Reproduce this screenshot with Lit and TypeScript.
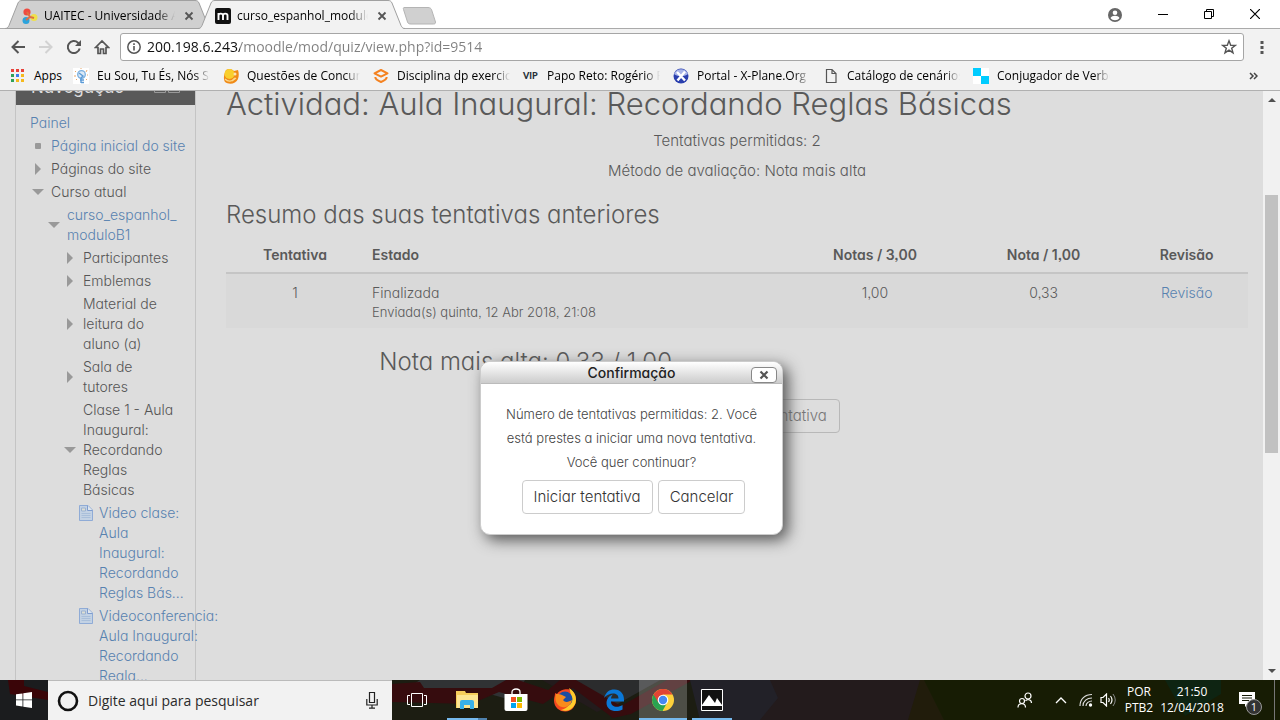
import { LitElement, html, css, svg, nothing } from "lit";
import { customElement, property } from "lit/decorators.js";

const closeMark = (stroke: string) => svg`<path d="M1.500 1.500l7 7M8.500 1.500l-7 7" stroke=${stroke} stroke-width="1.800" fill="none"/>`;

const bookmarkIcons: Record<string, unknown> = {
  idea: svg`<rect width="16" height="16" fill="#fff"/><circle cx="8.500" cy="6.500" r="3.800" fill="#dbe9f6" stroke="#7aaede" stroke-width="1.300"/><path d="M2 3l1 1M14 2l-1 2M8 0v1M1 8h2M3 12l1-1M13 11l1 1M14 7h1" stroke="#e9a86a"/><path d="M6 5l4 3-2 2v5M7 12h4M8 14.500h3" stroke="#5c9bd6" stroke-width="1.400" fill="none"/>`,
  owl: svg`<path d="M3 2c3-2 6-1 8 1l4-1c1 3 1 6 0 9-2 5-9 6-13 3-2-3-1-8 1-12z" fill="#f08a17"/><circle cx="6.500" cy="6" r="5" fill="#f9cf2d"/><path d="M2 11c3 3 7 3 10-1M9 13l4-3" stroke="#fbd98c" stroke-width="1.400" fill="none"/><circle cx="12" cy="6" r="1.500" fill="#fbe3b0"/>`,
  cap: svg`<path d="M8 2l6.500 3.300L8 8.600 1.500 5.300z" fill="none" stroke="#f58220" stroke-width="2" stroke-linejoin="round"/><path d="M2.300 9c0 2 2 3.500 5.700 5 3.700-1.500 5.700-3 5.700-5" fill="none" stroke="#f58220" stroke-width="2"/>`,
  plane: svg`<circle cx="8" cy="8" r="7.500" fill="#2a3fae"/><path d="M1 6a7.500 7.500 0 0 1 14 0C11 9 5 9 1 6z" fill="#a8b4e8"/><path d="M4 4l8 8.500M12 3.500L4.500 12.500" stroke="#fff" stroke-width="2.400"/>`,
  file: svg`<path d="M3.500 1.500h5.500l4 4v9H3.500zM9 1.500v4h4" fill="none" stroke="#555" stroke-width="1.200"/>`,
  squares: svg`<rect width="16" height="16" fill="#fff"/><path d="M0 0h8v8H0zM8 8h8v8H8z" fill="#0cf"/>`,
  vip: nothing,
};

const bookmarks = [
  ["idea", "Eu Sou, Tu És, Nós Somos"],
  ["owl", "Questões de Concursos"],
  ["cap", "Disciplina dp exercicios"],
  ["vip", "Papo Reto: Rogério Faria"],
  ["plane", "Portal - X-Plane.Org Forum"],
  ["file", "Catálogo de cenários X"],
  ["squares", "Conjugador de Verbos"],
];

type Node = { level: number; lines: string[]; mark: "square" | "closed" | "open" | "page" | "none"; link?: boolean };

const tree: Node[] = [
  { level: 0, lines: ["Painel"], mark: "none", link: true },
  { level: 1, lines: ["Página inicial do site"], mark: "square", link: true },
  { level: 1, lines: ["Páginas do site"], mark: "closed" },
  { level: 1, lines: ["Curso atual"], mark: "open" },
  { level: 2, lines: ["curso_espanhol_", "moduloB1"], mark: "open", link: true },
  { level: 3, lines: ["Participantes"], mark: "closed" },
  { level: 3, lines: ["Emblemas"], mark: "closed" },
  { level: 3, lines: ["Material de", "leitura do", "aluno (a)"], mark: "closed" },
  { level: 3, lines: ["Sala de", "tutores"], mark: "closed" },
  { level: 3, lines: ["Clase 1 - Aula", "Inaugural:", "Recordando", "Reglas", "Básicas"], mark: "open" },
  { level: 4, lines: ["Video clase:", "Aula", "Inaugural:", "Recordando", "Reglas Bás..."], mark: "page", link: true },
  { level: 4, lines: ["Videoconferencia:", "Aula Inaugural:", "Recordando", "Regla..."], mark: "page", link: true },
];

const marks: Record<string, unknown> = {
  square: html`<svg width="16" height="12" viewBox="0 0 16 12"><rect x="5" y="3" width="6" height="6" rx="1" fill="#999"/></svg>`,
  closed: html`<svg width="16" height="12" viewBox="0 0 16 12"><path d="M5 0l6 6-6 6z" fill="#999"/></svg>`,
  open: html`<svg width="16" height="12" viewBox="0 0 16 12"><path d="M2 3h12l-6 6z" fill="#999"/></svg>`,
  page: html`<svg width="14" height="16" viewBox="0 0 14 16"><path d="M.500.500h8.500l4.500 4.500v10.500H.500z" fill="#c3d2e4" stroke="#8fabd6"/><path d="M8.500.500v5h5" fill="#dfe6ee" stroke="#7f9dcf"/><path d="M2.500 3h4v3h-4z" fill="#dedfd4" stroke="#9bb2d2"/><path d="M2.500 8.500h9M2.500 10.500h9M2.500 12.500h9" stroke="#a9bfda"/></svg>`,
  none: nothing,
};

@customElement("browser-chrome")
class BrowserChrome extends LitElement {
  static styles = css`
    :host { display: block; font: 12px/16px "Open Sans", "Noto Sans", sans-serif; color: #000; }
    svg { display: block; flex: none; }
    button { border: 0; padding: 0; background: none; display: grid; place-items: center; flex: none; }
    a { color: inherit; text-decoration: none; }
    .strip { display: flex; height: 29px; background: #fff; padding: 0 2px 0 5px; box-shadow: inset 0 -1px #aaa; }
    .tab { position: relative; display: flex; align-items: center; gap: 6px; width: 207px; height: 29px; padding: 2px 15px 0 17px; box-sizing: border-box; }
    .tab + .tab { margin-left: -14px; z-index: 1; }
    .shape { position: absolute; inset: 0; z-index: -1; }
    .first { z-index: 0; }
    .label { flex: 1; min-width: 0; overflow: hidden; white-space: nowrap; mask-image: linear-gradient(90deg, #000 86%, transparent); }
    .tab .close { width: 16px; height: 16px; }
    .new { margin: 0 auto 0 -3px; padding-top: 3px; }
    .win { width: 46px; height: 27px; }
    .user { margin-right: 18px; }
    .bar { display: flex; align-items: center; background: #f2f2f2; padding: 4px 0 1px 4px; }
    .bar .tool { width: 28px; height: 28px; }
    .omni { flex: 1; display: flex; align-items: center; gap: 6px; height: 28px; box-sizing: border-box; margin-left: 4px; padding: 0 6px; background: #fff; border: 1px solid #a6a6a6; border-radius: 3px; }
    .omni input { flex: 1; min-width: 0; border: 0; padding: 0; outline: 0; font: 14px/20px "Open Sans", sans-serif; color: transparent; background: linear-gradient(90deg, #111 93px, #808080 93px); -webkit-background-clip: text; background-clip: text; }
    .menu { width: 36px; height: 28px; }
    .marks { display: flex; align-items: center; gap: 13px; height: 28px; padding: 0 22px 0 10px; background: #f2f2f2; border-bottom: 1px solid #b0b0b0; }
    .mark { display: flex; align-items: center; gap: 8px; width: 137px; }
    .mark.apps { width: 50px; }
    .apps .label { mask-image: none; overflow: visible; }
    .vip { flex: none; width: 16px; font: 900 9px/16px Lato, sans-serif; color: #263038; }
    .more { margin-left: auto; }
  `;

  render() {
    return html`
      <div class="strip">
        <div class="tab first">
          <svg class="shape" width="207" height="29" viewBox="0 0 207 29"><path d="M0 28.500c2 0 3-1 4-3L13 3c1-2 2-2.500 4-2.500h173c2 0 3 .500 4 2.500l9 22.500c1 2 2 3 4 3z" fill="#d0d0d0" stroke="#a0a0a0"/></svg>
          <svg width="16" height="16" viewBox="0 0 16 16"><circle cx="5" cy="4" r="3.600" fill="#ee4b40"/><circle cx="12" cy="9.500" r="3.500" fill="#efe04a"/><circle cx="4" cy="12.500" r="3.500" fill="#2ba3dc"/><path d="M5 4l3 5 4 1M8 9l-4 3" stroke="#dd7044" stroke-width="2" fill="none"/></svg>
          <span class="label">UAITEC - Universidade Aberta</span>
          <button class="close" aria-label="Fechar guia"><svg width="10" height="10">${closeMark("#555")}</svg></button>
        </div>
        <div class="tab">
          <svg class="shape" width="207" height="29" viewBox="0 0 207 29"><path d="M0 29c2 0 3-1 4-3.500L13 3c1-2 2-2.500 4-2.500h173c2 0 3 .500 4 2.500l9 22.500c1 2.500 2 3.500 4 3.500z" fill="#f2f2f2"/><path d="M0 28.500c2 0 3-1 4-3L13 3c1-2 2-2.500 4-2.500h173c2 0 3 .500 4 2.500l9 22.500c1 2 2 3 4 3" fill="none" stroke="#a0a0a0"/></svg>
          <svg width="16" height="16" viewBox="0 0 16 16"><rect width="16" height="16" rx="2" fill="#111"/><path d="M3.500 12V5M3.500 7.500c0-2.500 4.500-2.500 4.500 0V12M8 7.500c0-2.500 4.500-2.500 4.500 0V12" fill="none" stroke="#fff" stroke-width="1.900"/></svg>
          <span class="label">curso_espanhol_moduloB1</span>
          <button class="close" aria-label="Fechar guia"><svg width="10" height="10">${closeMark("#555")}</svg></button>
        </div>
        <button class="new" aria-label="Nova guia"><svg width="34" height="18" viewBox="0 0 34 18"><path d="M2 .500h24c2 0 3 1 3.500 2l4 12.500c0 1.500-.500 2-2 2H9c-2 0-3-.500-3.500-2L1.500 2.500c-.400-1 0-2 .500-2z" fill="#d0d0d0" stroke="#b4b4b4"/></svg></button>
        <button class="user" aria-label="Usuário"><svg width="14" height="14" viewBox="0 0 14 14"><circle cx="7" cy="7" r="7" fill="#666"/><circle cx="7" cy="4.700" r="2.300" fill="#fff"/><path d="M2.500 10c1.500-3 7.500-3 9 0-2 3-7 3-9 0z" fill="#fff"/></svg></button>
        <button class="win" aria-label="Minimizar"><svg width="10" height="10"><path d="M0 5.500h10" stroke="#000"/></svg></button>
        <button class="win" aria-label="Restaurar"><svg width="10" height="10"><path d="M.500 2.500h7v7h-7zM2.500 2.500v-2h7v7h-2" fill="none" stroke="#000"/></svg></button>
        <button class="win" aria-label="Fechar"><svg width="10" height="10"><path d="M0 0l10 10M10 0L0 10" stroke="#000" stroke-width="1.200"/></svg></button>
      </div>
      <div class="bar">
        <button class="tool" aria-label="Voltar"><svg width="14" height="14" viewBox="0 0 14 14"><path d="M14 7H1.500M7.500 1L1.500 7l6 6" fill="none" stroke="#555" stroke-width="2"/></svg></button>
        <button class="tool" aria-label="Avançar"><svg width="14" height="14" viewBox="0 0 14 14"><path d="M0 7h12.500M6.500 1l6 6-6 6" fill="none" stroke="#d2d2d2" stroke-width="2"/></svg></button>
        <button class="tool" aria-label="Recarregar"><svg width="14" height="14" viewBox="0 0 14 14"><path d="M12.700 8.500A6 6 0 1 1 11 2.700l1.200 1.200" fill="none" stroke="#555" stroke-width="2"/><path d="M14 0v6H8z" fill="#555"/></svg></button>
        <button class="tool" aria-label="Página inicial"><svg width="16" height="16" viewBox="0 0 16 16"><path d="M1.500 8.500L8 2l6.500 6.500H12v6H9.500V10h-3v4.500H4v-6z" fill="none" stroke="#555" stroke-width="1.700"/></svg></button>
        <div class="omni">
          <svg width="14" height="14" viewBox="0 0 14 14"><circle cx="7" cy="7" r="6.200" fill="none" stroke="#555" stroke-width="1.500"/><path d="M7 6v4.500M7 3.300v1.600" stroke="#555" stroke-width="1.600"/></svg>
          <input aria-label="Endereço" value="200.198.6.243/moodle/mod/quiz/view.php?id=9514">
          <button aria-label="Favoritar"><svg width="16" height="16" viewBox="0 0 16 16"><path d="M8 1.800l1.700 4.400 4.600.200-3.600 2.900 1.300 4.500L8 11.200l-4 2.600 1.300-4.500L1.700 6.400l4.600-.200z" fill="none" stroke="#555" stroke-width="1.400"/></svg></button>
        </div>
        <button class="menu" aria-label="Menu"><svg width="4" height="14"><path d="M.500 1h3v3h-3zM.500 6h3v3h-3zM.500 11h3v3h-3z" fill="#555"/></svg></button>
      </div>
      <nav class="marks" aria-label="Favoritos">
        <a class="mark apps" href="#"><svg width="16" height="16" viewBox="0 0 16 16">${[["#e8423a", "#e8423a", "#e8423a"], ["#2fa159", "#3b7ded", "#f5b91c"], ["#2fa159", "#f5b91c", "#f5b91c"]].map((row, y) => row.map((c, x) => svg`<rect x=${1 + x * 5} y=${1 + y * 5} width="3" height="3" fill=${c}/>`))}</svg><span class="label">Apps</span></a>
        ${bookmarks.map(([icon, label]) => html`<a class="mark" href="#">${icon === "vip" ? html`<span class="vip">VIP</span>` : html`<svg width="16" height="16" viewBox="0 0 16 16">${bookmarkIcons[icon]}</svg>`}<span class="label">${label}</span></a>`)}
        <button class="more" aria-label="Mais favoritos"><svg width="9" height="8"><path d="M1 1l3 3-3 3M5 1l3 3-3 3" fill="none" stroke="#444" stroke-width="1.500"/></svg></button>
      </nav>`;
  }
}

@customElement("course-nav")
class CourseNav extends LitElement {
  static styles = css`
    :host { display: block; border: 1px solid #c4c4c4; border-top: 0; color: #555; font-size: 14px; line-height: 20px; }
    .head { display: flex; align-items: center; gap: 2px; height: 30px; padding: 0 15px 6px; box-sizing: border-box; background: #595959; color: #ddd; font-size: 17px; font-weight: 400; margin: 0; }
    .title { flex: 1; }
    ul { list-style: none; margin: 0; padding: 8px 0 0 14px; white-space: nowrap; }
    .item { display: flex; align-items: center; gap: 5px; padding-bottom: 3px; }
    .l2 { padding-left: 16px; }
    .l3 { padding-left: 32px; }
    .l4 { padding-left: 49px; gap: 6px; align-items: flex-start; }
    .l4 svg { margin-top: 2px; }
    svg { flex: none; display: block; }
    .line { display: block; }
    a { color: #5882b0; text-decoration: none; }
  `;
  render() {
    return html`
      <h2 class="head"><span class="title">Navegação</span>
        <svg width="26" height="12" viewBox="0 0 26 12"><path d="M.500.500h11v11H.500zM14.500.500h11v11h-11z" fill="none" stroke="#999"/></svg></h2>
      <ul>${tree.map((n) => {
        const text = n.lines.map((l) => html`<span class="line">${l}</span>`);
        return html`<li class="item l${n.level}">${marks[n.mark]}${n.link ? html`<a href="#">${text}</a>` : html`<span>${text}</span>`}</li>`;
      })}</ul>`;
  }
}

@customElement("confirm-dialog")
class ConfirmDialog extends LitElement {
  @property() heading = "";
  static styles = css`
    :host { display: block; width: 303px; background: #fff; border: 1px solid #ccc; border-radius: 10px; box-sizing: border-box; box-shadow: 5px 5px 15px #555; overflow: hidden; color: #444; }
    .head { display: grid; grid-template-columns: 26px 1fr 26px; align-items: center; height: 21px; padding: 0 5px; background: linear-gradient(#fff, #ccc); border-bottom: 1px solid #bbb; }
    h2 { grid-column: 2; margin: 0; text-align: center; font-size: 14px; line-height: 20px; font-weight: 500; color: #222; }
    button { font: inherit; font-feature-settings: inherit; background: #fff; border: 1px solid #ccc; border-radius: 4px; }
    .close { display: grid; place-items: center; height: 16px; padding: 0; margin-top: 4px; border-color: #888; }
    .body { padding: 18px 20px 20px; text-align: center; }
    p { margin: 0 0 6px; font-size: 13px; line-height: 24px; }
    .line { display: block; white-space: nowrap; }
    .actions { display: flex; justify-content: center; gap: 5px; padding-left: 4px; }
    .actions button { height: 34px; padding: 0 11px; font-size: 15px; color: #333; white-space: nowrap; }
  `;
  render() {
    return html`
      <div class="head"><h2>${this.heading}</h2><button class="close" aria-label="Fechar"><svg width="10" height="10"><path d="M1.500 1.500l7 7M8.500 1.500l-7 7" stroke="#555" stroke-width="2.200"/></svg></button></div>
      <div class="body">
        <p><span class="line">Número de tentativas permitidas: 2. Você</span><span class="line">está prestes a iniciar uma nova tentativa.</span><span class="line">Você quer continuar?</span></p>
        <div class="actions"><button>Iniciar tentativa</button><button>Cancelar</button></div>
      </div>`;
  }
}

@customElement("task-bar")
class TaskBar extends LitElement {
  static styles = css`
    :host { display: flex; position: relative; height: 40px; background: #151a06; color: #fff; font: 12px/16px "Open Sans", "Noto Sans", sans-serif; overflow: hidden; }
    svg { display: block; }
    .wall { position: absolute; inset: 0; width: 100%; height: 100%; }
    button { position: relative; border: 0; padding: 0; background: none; color: inherit; font: inherit; display: grid; place-items: center; flex: none; }
    .start { width: 48px; }
    .search { position: relative; display: flex; align-items: center; gap: 9px; width: 344px; box-sizing: border-box; padding: 0 14px 0 9px; background: #f2f2f2; border-top: 1px solid #bbb; }
    .search input { flex: 1; min-width: 0; border: 0; padding: 0; outline: 0; background: none; font: 14px/20px "Open Sans", sans-serif; color: #222; }
    .search input::placeholder { color: #2b2b2b; opacity: 1; }
    .apps { display: flex; gap: 1px; }
    .app { width: 48px; }
    .tasks { width: 50px; }
    .run::after { content: ""; position: absolute; left: 4px; right: 4px; bottom: 0; height: 2px; background: #76b9ed; }
    .stack::after { background: linear-gradient(90deg, #76b9ed 31px, #4f82ae 31px); }
    .on { background: #ffffff38; }
    .on::after { left: 0; right: 0; }
    .tray { display: flex; margin-left: auto; }
    .people { width: 38px; }
    .chev { width: 34px; }
    .net { width: 16px; }
    .vol { width: 28px; }
    .lang { width: 34px; }
    .clock { width: 72px; }
    .note { width: 46px; padding-right: 8px; }
    .desk { width: 6px; border-left: 1px solid #777; }
    .two { display: block; text-align: center; }
    .badge { position: absolute; left: 18px; top: 19px; width: 14px; height: 14px; border: 1px solid #999; border-radius: 50%; background: #333; font-size: 11px; line-height: 14px; }
  `;
  render() {
    return html`
      <svg class="wall" viewBox="0 0 1280 40" preserveAspectRatio="none">
        <rect width="1280" height="40" fill="#171c04"/><path d="M0 0h48v40H0z" fill="#1b1c1e"/><path d="M8 0h16v6l24 6v8L10 14z" fill="#3a0508"/>
        <path d="M392 0h528l20 40H392z" fill="#231b1c"/><path d="M392 0h150l55 32 65-32h40v40H392z" fill="#1c1d12"/>
        <path d="M420 0h105l-5 8-16 10-36-10h-60z" fill="#303234"/><path d="M560 0h100l-46 26z" fill="#2b2c2d"/>
        <path d="M392 4l28-2 4 6h68l14-8h12l30 10 12-10h16l45 26 46-26h26l-62 34-18 4-40-30-18 8-12 8-44-12-28 12-79-2z" fill="#360c0e"/>
        <path d="M690 0h80l8 18-18 22h-60z" fill="#222128"/><path d="M920 0h4l20 40h-36z" fill="#211c0b"/><path d="M1165 0l20 36 36-22V0z" fill="#0e2412"/>
      </svg>
      <button class="start" aria-label="Iniciar"><svg width="16" height="16" viewBox="0 0 16 16"><path d="M0 2.300L6.500 1.400v6.100H0zM7.300 1.300L16 0v7.500H7.300zM0 8.300h6.500v6.200L0 13.600zM7.300 8.300H16V16l-8.700-1.300z" fill="#fff"/></svg></button>
      <label class="search"><svg width="22" height="22" viewBox="0 0 22 22"><circle cx="11" cy="11" r="9" fill="none" stroke="#111" stroke-width="2.600"/></svg>
        <input aria-label="Pesquisar" placeholder="Digite aqui para pesquisar">
        <svg width="12" height="17" viewBox="0 0 12 17"><path d="M3.500.500h5v10h-5zM.800 7v6h10.400V7M6 13v3M3 16.200h6" fill="none" stroke="#222" stroke-width="1.200"/></svg></label>
      <div class="apps">
        <button class="app tasks" aria-label="Visão de tarefas"><svg width="20" height="14" viewBox="0 0 20 14"><path d="M4.500.500h11v13h-11zM3 2.500H.500v9H3M17 2.500h2.500v9H17" fill="none" stroke="#fff"/></svg></button>
        <button class="app run stack" aria-label="Explorador"><svg width="22" height="20" viewBox="0 0 22 20"><path d="M0 1h9l1 2h12v15H0z" fill="#f6cd5b"/><path d="M1 5h21v13H1z" fill="#fde592"/><path d="M4 19v-7q0-2 2-2h10q2 0 2 2v7h-4v-4H8v4z" fill="#39b1e9"/></svg></button>
        <button class="app" aria-label="Loja"><svg width="24" height="24" viewBox="0 0 24 24"><path d="M8 7V4c0-4 8-4 8 0v3" fill="none" stroke="#fff" stroke-width="1.300"/><path d="M.500 6h23v15q0 2-2 2h-19q-2 0-2-2z" fill="#fff"/><path d="M7 9h5v5H7z" fill="#f25022"/><path d="M13 9h5v5h-5z" fill="#7fba00"/><path d="M7 15h5v5H7z" fill="#00a4ef"/><path d="M13 15h5v5h-5z" fill="#ffb900"/></svg></button>
        <button class="app" aria-label="Firefox"><svg width="24" height="24" viewBox="0 0 24 24"><path d="M2 5l2 1c6-7 13-4 14-4 4 3 5 7 5 10a11 11 0 0 1-22 1C1 9 2 8 2 5z" fill="#f5481f"/><path d="M16 0c6 4 7 8 7 12a11 11 0 0 1-15 10c10-2 12-12 8-22z" fill="#ffcb2c"/><circle cx="12" cy="11" r="7.500" fill="#1b4da1"/><path d="M3 6c3 0 4 0 6 1l4 2-3 3c2 3 6 2 9 0-1 6-6 8-10 7-5-1-8-7-6-13z" fill="#f98b1c"/></svg></button>
        <button class="app" aria-label="Edge"><svg width="22" height="24" viewBox="0 0 22 24"><path d="M1 10C3 4 6 1.500 11.500 1.500c6 0 9.500 4.500 9.500 10v2H8c0 6 7 6.500 11.500 3.500v4.500c-7 3.500-16 1-16-6.500 0-5 3.500-7.500 6.500-8.500-1 1-2 2.500-2 4h7.500c0-7-10-6-14.500-.500z" fill="#0b78d7"/></svg></button>
        <button class="app run on" aria-label="Chrome"><svg width="24" height="24" viewBox="0 0 24 24"><circle cx="12" cy="12" r="11" fill="#fdd13b"/><path d="M12 12L2.500 6.500A11 11 0 0 0 11.500 23L16.500 14z" fill="#2aa351"/><path d="M2.500 6.500A11 11 0 0 1 21.500 6.500H12L7 14z" fill="#e24434"/><circle cx="12" cy="12" r="5.300" fill="#fff"/><circle cx="12" cy="12" r="4.200" fill="#4688f1"/></svg></button>
        <button class="app run" aria-label="Fotos"><svg width="22" height="22" viewBox="0 0 22 22"><path d="M.500.500h21v21H.500z" fill="#111" stroke="#fff"/><path d="M1 16l7-10 6 8 2-5 5 7v1H1z" fill="#fff"/></svg></button>
      </div>
      <div class="tray">
        <button class="people" aria-label="Pessoas"><svg width="16" height="16" viewBox="0 0 16 16"><path d="M1 15.500c0-5 7.500-5 7.500 0M8.500 9c1.500-2.500 6-1.500 6 2" fill="none" stroke="#fff" stroke-width="1.200"/><circle cx="5" cy="9" r="2.500" fill="none" stroke="#fff" stroke-width="1.200"/><circle cx="11" cy="4" r="3" fill="none" stroke="#fff" stroke-width="1.200"/></svg></button>
        <button class="chev" aria-label="Ícones ocultos"><svg width="12" height="8"><path d="M1 7l5-5 5 5" fill="none" stroke="#fff" stroke-width="1.300"/></svg></button>
        <button class="net" aria-label="Rede"><svg width="14" height="14" viewBox="0 0 14 14"><path d="M1 13C1 6 6 1.500 13 1.500M4 13c0-5 4-8 9-8M7 13c0-3 3-5 6-5" fill="none" stroke="#ddd" stroke-width="1.200"/><circle cx="11.500" cy="12" r="1.700" fill="#fff"/></svg></button>
        <button class="vol" aria-label="Volume"><svg width="17" height="14" viewBox="0 0 17 14"><path d="M1 4.500h2L6.500 1v12L3 9.500H1zM8.500 5q1.500 2 0 4M10.500 3q3 4 0 8" fill="none" stroke="#fff" stroke-width="1.200"/><path d="M13 1q4.500 6 0 12" fill="none" stroke="#888"/></svg></button>
        <button class="lang"><span><span class="two">POR</span><span class="two">PTB2</span></span></button>
        <button class="clock"><span><span class="two">21:50</span><span class="two">12/04/2018</span></span></button>
        <button class="note" aria-label="Notificações"><svg width="16" height="16" viewBox="0 0 16 16"><path d="M0 0h16v12h-7l-3 3v-3H0z" fill="#fff"/><path d="M3 3.500h10M3 6h10M3 8.500h7" stroke="#151a06"/></svg><span class="badge">1</span></button>
        <button class="desk" aria-label="Mostrar área de trabalho"></button>
      </div>`;
  }
}

@customElement("app-root")
class AppRoot extends LitElement {
  static styles = css`
    :host { display: flex; flex-direction: column; height: 100vh; overflow: hidden; background: #ddd; color: #595959; font: 300 14px/20px Inter, "Open Sans", sans-serif; font-feature-settings: "cv11", "ss03"; }
    .view { flex: 1; min-height: 0; display: flex; }
    .page { position: relative; flex: 1; overflow: hidden; }
    .cols { display: grid; grid-template-columns: 181px minmax(0, 1fr); gap: 30px; padding: 0 15px; margin-top: -16px; }
    h1, h2, h3, p { margin: 0; font-weight: 300; }
    h1 { font-size: 31px; line-height: 40px; padding: 9px 0 7px; }
    .info { text-align: center; font-size: 15px; padding-bottom: 10px; }
    h3 { font-size: 24px; line-height: 40px; }
    .summary { padding-top: 4px; }
    table { width: 100%; table-layout: fixed; border-collapse: collapse; margin-top: 2px; }
    th, td { box-sizing: border-box; padding: 8px; text-align: center; vertical-align: top; }
    th { font-weight: 600; padding: 8px 8px 7px; border-bottom: 2px solid #c5c5c5; }
    td { background: #d9d9d9; padding: 9px 8px 7px; }
    .c1 { width: 13.5%; }
    .c2 { width: 41.5%; }
    .c3 { width: 17%; }
    .c4 { width: 16%; }
    .left { text-align: left; }
    .when { display: block; font-size: 13px; line-height: 18px; }
    a { color: #5882b0; text-decoration: none; }
    .best { padding: 14px 0 0 15%; }
    .again { display: block; margin: 17px auto 0; height: 34px; padding: 0 12px; border: 1px solid #b8b8b8; border-radius: 4px; background: none; font: inherit; font-size: 15px; font-feature-settings: inherit; color: #777; }
    .layer { position: absolute; inset: 0; display: flex; align-items: flex-start; justify-content: center; padding-top: 270px; }
    .scroll { width: 17px; background: #f1f1f1; display: flex; flex-direction: column; align-items: center; }
    .scroll svg { display: block; flex: none; }
    .track { flex: 1; width: 13px; display: grid; grid-template-rows: 87fr 258fr 210fr; }
    .thumb { grid-row: 2; background: #c1c1c1; }
  `;
  render() {
    return html`
      <browser-chrome></browser-chrome>
      <div class="view">
        <div class="page">
          <div class="cols">
            <course-nav></course-nav>
            <main>
              <h1>Actividad: Aula Inaugural: Recordando Reglas Básicas</h1>
              <p class="info">Tentativas permitidas: 2</p>
              <p class="info">Método de avaliação: Nota mais alta</p>
              <h3 class="summary">Resumo das suas tentativas anteriores</h3>
              <table>
                <thead><tr><th class="c1">Tentativa</th><th class="c2 left">Estado</th><th class="c3">Notas / 3,00</th><th class="c4">Nota / 1,00</th><th>Revisão</th></tr></thead>
                <tbody><tr><td>1</td><td class="left">Finalizada<span class="when">Enviada(s) quinta, 12 Abr 2018, 21:08</span></td><td>1,00</td><td>0,33</td><td><a href="#">Revisão</a></td></tr></tbody>
              </table>
              <h3 class="best">Nota mais alta: 0,33 / 1,00</h3>
              <button class="again">Fazer uma outra tentativa</button>
            </main>
          </div>
          <div class="layer"><confirm-dialog role="dialog" heading="Confirmação"></confirm-dialog></div>
        </div>
        <div class="scroll">
          <svg width="17" height="17"><path d="M5 11l4-4 4 4z" fill="#505050"/></svg>
          <div class="track"><div class="thumb"></div></div>
          <svg width="17" height="17"><path d="M5 6h8l-4 4z" fill="#505050"/></svg>
        </div>
      </div>
      <task-bar></task-bar>`;
  }
}
